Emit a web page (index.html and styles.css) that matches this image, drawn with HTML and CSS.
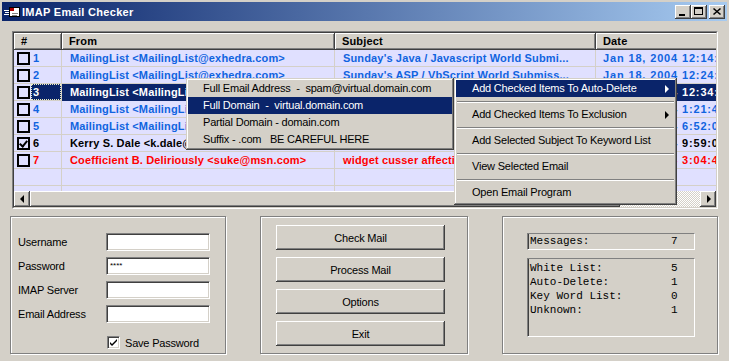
FILE: index.html
```html
<!DOCTYPE html>
<html lang="en">
<head>
    <meta charset="UTF-8">
    <title>IMAP Email Checker</title>
    <link rel="stylesheet" href="styles.css">
</head>
<body>
<div class="window">
    <div class="titlebar">
        <svg class="app-icon" width="16" height="14" viewBox="0 0 16 14">
            <path d="M0 5.5h5M1 7.5h4M0 9.5h5" stroke="#fff"/>
            <rect x="5.5" y="2.5" width="10" height="9" fill="#fff" stroke="#000"/>
            <rect x="6" y="3" width="4" height="3" fill="#b00000"/>
            <path d="M8 8.5h6M8 10.5h5" stroke="#808080"/>
        </svg>
        <span class="title">IMAP Email Checker</span>
        <div class="caption">
            <span class="cap-btn">
                <svg width="16" height="14" viewBox="0 0 16 14"><rect x="4" y="9" width="6" height="2" fill="#000"/></svg>
            </span>
            <span class="cap-btn">
                <svg width="16" height="14" viewBox="0 0 16 14"><rect x="3.5" y="2.5" width="8" height="7" fill="none" stroke="#000"/><rect x="3" y="3" width="9" height="1" fill="#000"/></svg>
            </span>
            <span class="cap-btn close">
                <svg width="16" height="14" viewBox="0 0 16 14"><path d="M4.5 3.5l7 6M11.5 3.5l-7 6" stroke="#000" stroke-width="1.6"/></svg>
            </span>
        </div>
    </div>

    <div class="client">
        <div class="listview">
            <div class="lv-inner">
                <div class="lv-view">
                    <div class="lv-row lv-head">
                        <div class="hcell">#</div>
                        <div class="hcell">From</div>
                        <div class="hcell">Subject</div>
                        <div class="hcell">Date</div>
                    </div>
                    <div class="lv-row blue">
                        <div class="cell first"><span class="chk"></span><span class="num">1</span></div>
                        <div class="cell">MailingList &lt;MailingList@exhedra.com&gt;</div>
                        <div class="cell">Sunday's Java / Javascript World Submi...</div>
                        <div class="cell date">Jan 18, 2004 12:14:51 PM</div>
                    </div>
                    <div class="lv-row blue">
                        <div class="cell first"><span class="chk"></span><span class="num">2</span></div>
                        <div class="cell">MailingList &lt;MailingList@exhedra.com&gt;</div>
                        <div class="cell">Sunday's ASP / VbScript World Submiss...</div>
                        <div class="cell date">Jan 18, 2004 12:24:08 PM</div>
                    </div>
                    <div class="lv-row selected">
                        <div class="cell first"><span class="chk"></span><span class="num focus">3</span></div>
                        <div class="cell">MailingList &lt;MailingList@exhedra.com&gt;</div>
                        <div class="cell">Sunday's Visual Basic World Submiss...</div>
                        <div class="cell date">Jan 18, 2004 12:34:17 PM</div>
                    </div>
                    <div class="lv-row blue">
                        <div class="cell first"><span class="chk"></span><span class="num">4</span></div>
                        <div class="cell">MailingList &lt;MailingList@exhedra.com&gt;</div>
                        <div class="cell">Sunday's C / C++ World Submissions...</div>
                        <div class="cell date">Jan 18, 2004 1:21:46 PM</div>
                    </div>
                    <div class="lv-row blue">
                        <div class="cell first"><span class="chk"></span><span class="num">5</span></div>
                        <div class="cell">MailingList &lt;MailingList@exhedra.com&gt;</div>
                        <div class="cell">Sunday's Perl World Submissions...</div>
                        <div class="cell date">Jan 18, 2004 6:52:03 PM</div>
                    </div>
                    <div class="lv-row black">
                        <div class="cell first"><span class="chk checked"></span><span class="num">6</span></div>
                        <div class="cell">Kerry S. Dale &lt;k.dale@mail.com&gt;</div>
                        <div class="cell">Re: project update</div>
                        <div class="cell date">Jan 18, 2004 9:59:02 PM</div>
                    </div>
                    <div class="lv-row red">
                        <div class="cell first"><span class="chk"></span><span class="num">7</span></div>
                        <div class="cell">Coefficient B. Deliriously &lt;suke@msn.com&gt;</div>
                        <div class="cell">widget cusser affection remit</div>
                        <div class="cell date">Jan 19, 2004 3:04:41 AM</div>
                    </div>
                    <div class="lv-row">
                        <div class="cell"></div><div class="cell"></div><div class="cell"></div><div class="cell"></div>
                    </div>
                    <div class="lv-row">
                        <div class="cell"></div><div class="cell"></div><div class="cell"></div><div class="cell"></div>
                    </div>
                </div>
                <div class="hscroll">
                    <span class="raised sb-btn"><span class="arrow left"></span></span>
                    <span class="raised sb-thumb"></span>
                    <span class="sb-track"></span>
                    <span class="raised sb-btn"><span class="arrow right"></span></span>
                </div>
            </div>
        </div>

        <div class="panels">
            <div class="group login">
                <label>Username</label><span class="field"></span>
                <label>Password</label><span class="field pw">****</span>
                <label>IMAP Server</label><span class="field"></span>
                <label>Email Address</label><span class="field"></span>
                <span></span>
                <span class="save"><span class="box-chk"><svg width="9" height="9" viewBox="0 0 9 9"><path d="M1 4l2 2 5-5v2l-5 5-2-2z" fill="#000"/></svg></span>Save Password</span>
            </div>
            <div class="group actions">
                <span class="raised btn">Check Mail</span>
                <span class="raised btn">Process Mail</span>
                <span class="raised btn">Options</span>
                <span class="raised btn">Exit</span>
            </div>
            <div class="group stats">
                <div class="readout single">
                    <span>Messages:</span><span>7</span>
                </div>
                <div class="readout multi">
                    <span>White List:</span><span>5</span>
                    <span>Auto-Delete:</span><span>1</span>
                    <span>Key Word List:</span><span>0</span>
                    <span>Unknown:</span><span>1</span>
                </div>
            </div>
        </div>
    </div>

    <!-- popup menus drawn over the list -->
    <div class="menu submenu">
        <div class="item">Full Email Address  -  spam@virtual.domain.com</div>
        <div class="item hot">Full Domain  -  virtual.domain.com</div>
        <div class="item">Partial Domain - domain.com</div>
        <div class="item">Suffix - .com   BE CAREFUL HERE</div>
    </div>
    <div class="menu mainmenu">
        <div class="item hot sub">Add Checked Items To Auto-Delete</div>
        <div class="sep"></div>
        <div class="item sub">Add Checked Items To Exclusion</div>
        <div class="sep"></div>
        <div class="item">Add Selected Subject To Keyword List</div>
        <div class="sep"></div>
        <div class="item">View Selected Email</div>
        <div class="sep"></div>
        <div class="item">Open Email Program</div>
    </div>
</div>
</body>
</html>
```

FILE: styles.css
```css
body {
    margin: 0;
    background-color: #d4d0c8;
    font-family: "Liberation Sans", Arial, sans-serif;
    font-size: 11px;
    letter-spacing: -0.2px;
    color: #000;
}
.window {
    position: relative;
    width: 729px;
    height: 361px;
    box-sizing: border-box;
    padding: 2px;
    background-color: #d4d0c8;
    overflow: hidden;
}
.titlebar {
    height: 19px;
    display: flex;
    align-items: center;
    padding-left: 2px;
    background: linear-gradient(to right, #0a246a, #a6caf0);
    color: white;
    font-weight: bold;
    letter-spacing: 0.3px;
}
.app-icon {
    margin-right: 2px;
}
.caption {
    margin-left: auto;
    margin-right: 2px;
    display: flex;
}
.cap-btn {
    width: 16px;
    height: 14px;
    background-color: #d4d0c8;
    box-shadow: inset -1px -1px #404040, inset 1px 1px #fff, inset -2px -2px #808080;
}
.cap-btn svg {
    display: block;
}
.cap-btn.close {
    margin-left: 2px;
}
.raised {
    background-color: #d4d0c8;
    box-shadow: inset -1px -1px #404040, inset 1px 1px #fff, inset -2px -2px #808080, inset 2px 2px #d4d0c8;
}
.client {
    padding: 10px 9px 0 8px;
}

/* list view */
.listview {
    margin-left: 2px;
    height: 178px;
    box-sizing: border-box;
    border: 1px solid;
    border-color: #808080 #fff #fff #808080;
}
.lv-inner {
    height: 100%;
    box-sizing: border-box;
    border: 1px solid;
    border-color: #404040 #d4d0c8 #d4d0c8 #404040;
    display: flex;
    flex-direction: column;
    background-color: #e0e0ff;
}
.lv-view {
    flex: 1;
    overflow: hidden;
}
.lv-row {
    display: grid;
    grid-template-columns: 48px 273px 261px 220px;
    height: 17px;
    font-weight: bold;
    letter-spacing: 0.15px;
}
.hcell {
    padding-left: 7px;
    line-height: 17px;
    background-color: #d4d0c8;
    box-shadow: inset -1px -1px #404040, inset 1px 1px #fff, inset -2px -2px #808080;
}
.cell {
    box-sizing: border-box;
    padding-left: 8px;
    line-height: 16px;
    white-space: nowrap;
    overflow: hidden;
    border-right: 1px solid #d4d0c8;
    border-bottom: 1px solid #d4d0c8;
}
.cell.date {
    padding-left: 7px;
    letter-spacing: 0.85px;
}
.cell.first {
    display: flex;
    align-items: center;
    padding-left: 3px;
}
.chk {
    width: 13px;
    height: 13px;
    box-sizing: border-box;
    border: 2px solid #000;
    margin-right: 1px;
    flex: none;
    position: relative;
}
.chk.checked::after {
    content: "";
    position: absolute;
    left: 2px;
    top: 0;
    width: 3px;
    height: 6px;
    border: solid #000;
    border-width: 0 2px 2px 0;
    transform: rotate(40deg);
}
.num {
    flex: 1;
    height: 16px;
    line-height: 16px;
    padding-left: 2px;
}
.blue { color: #1064e0; }
.black { color: #000; }
.red { color: #ff0000; }
.selected { color: #fff; }
.selected .cell {
    background-color: #0a246a;
    border-color: #0a246a;
}
.selected .cell.first {
    background-color: transparent;
    border-color: #d4d0c8;
}
.selected .num {
    background-color: #0a246a;
}
.num.focus {
    outline: 1px dotted #f0f0c0;
    outline-offset: -1px;
}
.hscroll {
    height: 16px;
    display: flex;
}
.sb-btn {
    width: 16px;
    display: flex;
    align-items: center;
    justify-content: center;
}
.sb-thumb {
    width: 590px;
}
.sb-track {
    flex: 1;
    background-image: conic-gradient(#fff 25%, #d4d0c8 0 50%, #fff 0 75%, #d4d0c8 0);
    background-size: 2px 2px;
}
.arrow {
    width: 0;
    height: 0;
    border-top: 4px solid transparent;
    border-bottom: 4px solid transparent;
}
.arrow.left {
    border-right: 4px solid #000;
    margin-right: 1px;
}
.arrow.right {
    border-left: 4px solid #000;
    margin-left: 1px;
}

/* bottom group boxes */
.panels {
    margin-top: 7px;
    display: flex;
    justify-content: space-between;
}
.group {
    height: 138px;
    box-sizing: border-box;
    border: 1px solid #808080;
    box-shadow: inset 1px 1px #fff, 1px 1px #fff;
}
.login {
    width: 216px;
    padding: 16px 0 0 7px;
    display: grid;
    grid-template-columns: 88px 104px;
    grid-auto-rows: 18px;
    row-gap: 6px;
    align-items: center;
}
.field {
    height: 18px;
    box-sizing: border-box;
    border: 1px solid;
    border-color: #808080 #fff #fff #808080;
    box-shadow: inset 1px 1px #404040, inset -1px -1px #d4d0c8;
    background-color: #fff;
}
.field.pw {
    font-size: 8px;
    line-height: 16px;
    padding-left: 3px;
    letter-spacing: 0;
}
.save {
    display: flex;
    align-items: center;
    margin-top: 9px;
    padding-left: 1px;
}
.box-chk {
    width: 13px;
    height: 13px;
    box-sizing: border-box;
    border: 1px solid;
    border-color: #808080 #fff #fff #808080;
    box-shadow: inset 1px 1px #404040, inset -1px -1px #d4d0c8;
    background-color: #fff;
    display: flex;
    align-items: center;
    justify-content: center;
    margin-right: 5px;
}
.actions {
    width: 208px;
    padding: 8px 0 0 15px;
    display: flex;
    flex-direction: column;
    gap: 7px;
}
.btn {
    width: 169px;
    height: 25px;
    display: flex;
    align-items: center;
    justify-content: center;
}
.stats {
    width: 216px;
    padding: 16px 0 0 24px;
}
.readout {
    width: 168px;
    box-sizing: border-box;
    border: 1px solid;
    border-color: #808080 #fff #fff #808080;
    box-shadow: inset 1px 0 #404040;
    display: grid;
    grid-template-columns: 141px auto;
    font-family: "Liberation Mono", "Courier New", monospace;
    font-size: 11px;
    letter-spacing: 0;
    padding-left: 2px;
}
.readout.single {
    height: 17px;
    line-height: 15px;
}
.readout.multi {
    height: 79px;
    margin-top: 8px;
    line-height: 14px;
    padding-top: 2px;
    align-content: start;
}

/* popup menus */
.menu {
    position: absolute;
    top: 78px;
    box-sizing: border-box;
    padding: 2px;
    background-color: #d4d0c8;
    box-shadow: inset -1px -1px #404040, inset 1px 1px #d4d0c8, inset -2px -2px #808080, inset 2px 2px #fff;
}
.menu .item {
    height: 17px;
    line-height: 17px;
    white-space: pre;
    position: relative;
}
.menu .item.hot {
    background-color: #0a246a;
    color: #fff;
}
.submenu {
    left: 186px;
    width: 268px;
    height: 72px;
}
.submenu .item {
    padding-left: 15px;
}
.mainmenu {
    left: 454px;
    width: 223px;
    height: 127px;
}
.mainmenu .item {
    padding-left: 16px;
}
.menu .item.sub::after {
    content: "";
    position: absolute;
    right: 6px;
    top: 5px;
    border-top: 4px solid transparent;
    border-bottom: 4px solid transparent;
    border-left: 4px solid #000;
}
.menu .item.hot.sub::after {
    border-left-color: #fff;
}
.sep {
    height: 9px;
    box-sizing: border-box;
    margin: 0 1px;
    padding-top: 4px;
}
.sep::before {
    content: "";
    display: block;
    border-top: 1px solid #808080;
    border-bottom: 1px solid #fff;
}
```
